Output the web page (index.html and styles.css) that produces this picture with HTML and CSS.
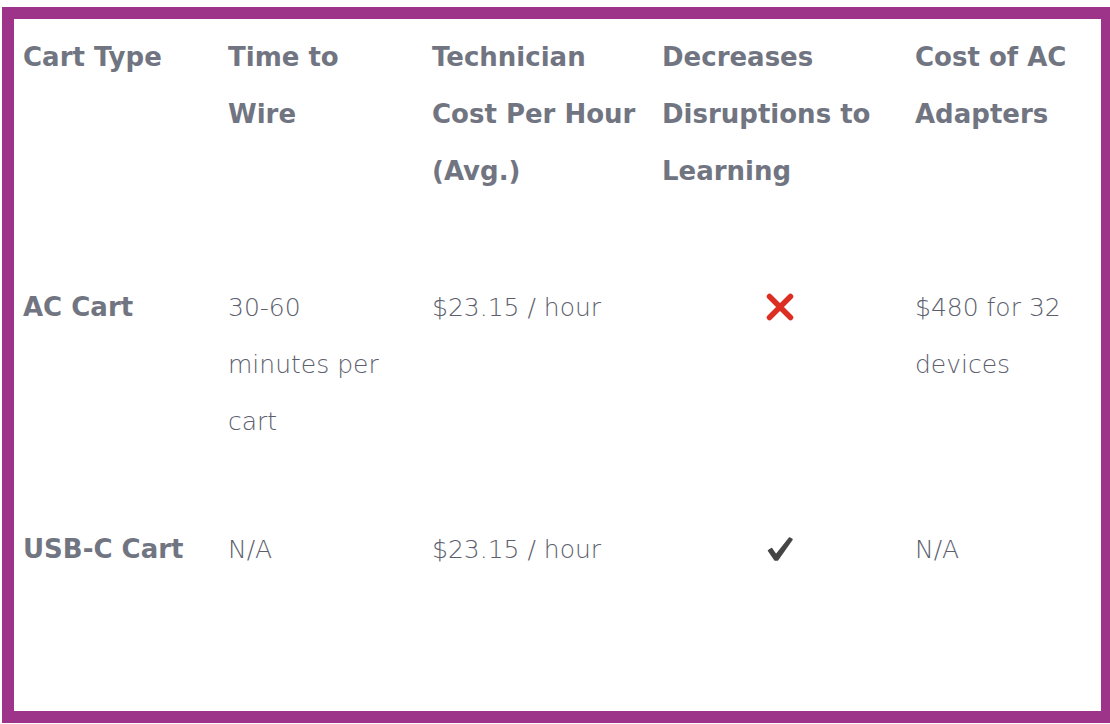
FILE: index.html
```html
<!DOCTYPE html>
<html lang="en">
<head>
    <meta charset="UTF-8">
    <meta name="viewport" content="width=device-width, initial-scale=1.0">
    <title>Cart Comparison</title>
    <link rel="stylesheet" href="styles.css">
</head>
<body>
    <div class="frame">
        <table class="compare">
            <colgroup>
                <col class="c1">
                <col class="c2">
                <col class="c3">
                <col class="c4">
                <col class="c5">
            </colgroup>
            <thead>
                <tr class="headRow">
                    <th>Cart Type</th>
                    <th>Time to Wire</th>
                    <th>Technician Cost Per Hour (Avg.)</th>
                    <th>Decreases Disruptions to Learning</th>
                    <th>Cost of AC Adapters</th>
                </tr>
            </thead>
            <tbody>
                <tr class="rowAc">
                    <th>AC Cart</th>
                    <td class="narrow">30-60 minutes per cart</td>
                    <td>$23.15 / hour</td>
                    <td class="mark">
                        <svg width="28" height="28" viewBox="0 0 28 28">
                            <path d="M3.5 3.5 L24.5 24.5 M24.5 3.5 L3.5 24.5" stroke="#dc2f22" stroke-width="5.5" stroke-linecap="round" fill="none"/>
                        </svg>
                    </td>
                    <td>$480 for 32 devices</td>
                </tr>
                <tr class="rowUsb">
                    <th>USB-C Cart</th>
                    <td>N/A</td>
                    <td>$23.15 / hour</td>
                    <td class="mark">
                        <svg width="28" height="28" viewBox="0 0 28 28">
                            <path d="M2.5 15.5 L5.5 13.5 L10 20 L23.5 3 L26 4.5 L11.5 25 L9 25 Z" fill="#454545" stroke="#454545" stroke-width="1.5" stroke-linejoin="round"/>
                        </svg>
                    </td>
                    <td>N/A</td>
                </tr>
            </tbody>
        </table>
    </div>
</body>
</html>
```

FILE: styles.css
```css
*{
    margin: 0px;
    padding: 0px;
    box-sizing: border-box;
}
body{
    background: #ffffff;
    font-family: "DejaVu Sans", "Open Sans", sans-serif;
    color: #717581;
}
.frame{
    margin: 7px 0 0 2px;
    width: 1111px;
    height: 716px;
    border: 12px solid #9e3489;
    background: #ffffff;
}
/* table */
.compare{
    border-collapse: collapse;
    table-layout: fixed;
    width: 1087px;
}
.c1{ width: 205px; }
.c2{ width: 204px; }
.c3{ width: 230px; }
.c4{ width: 253px; }
.c5{ width: 195px; }

th,
td{
    text-align: left;
    vertical-align: top;
    padding: 10px 9px 0 9px;
    line-height: 57px;
}
th{
    font-size: 26px;
    font-weight: 700;
}
td{
    font-size: 25px;
    font-weight: 300;
    color: #5c606d;
}
td.narrow{
    padding-right: 20px;
}
.headRow{
    height: 250px;
}
.rowAc{
    height: 242px;
}
.rowUsb{
    height: 200px;
}
.mark{
    text-align: center;
}
.mark svg{
    vertical-align: middle;
    margin-top: -4px;
}
```
